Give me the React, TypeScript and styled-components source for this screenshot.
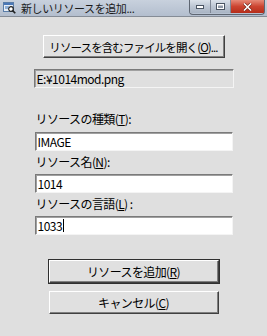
import React from "react";
import styled, { createGlobalStyle } from "styled-components";

//////////////////////////////////////////////////////////////////////////////

const GlobalStyle = createGlobalStyle`
  html, body {
    margin: 0;
    padding: 0;
    background: #dfdfdf;
  }
  body {
    font-family: "Noto Sans CJK JP", "Liberation Sans", sans-serif;
    font-size: 12px;
    color: #000;
  }
`;

const SWindow = styled.div`
  width: 267px;
  height: 336px;
  display: flex;
  flex-direction: column;
  background: #dfdfdf;
  overflow: hidden;
`;

const STitleBar = styled.div`
  height: 17px;
  box-sizing: border-box;
  display: flex;
  align-items: flex-start;
  background: linear-gradient(#c8d1dd, #b3bece);
  border-bottom: 1px solid #858c96;
`;

const STitleIcon = styled.svg`
  width: 13px;
  height: 12px;
  margin: 2px 0 0 3px;
  flex: none;
`;

const STitleText = styled.div`
  margin: 1px 0 0 5px;
  font-size: 11px;
  line-height: 14px;
  letter-spacing: -0.4px;
  color: #1a1a1a;
  flex: 1;
  min-width: 0;
  white-space: nowrap;
`;

const SCaption = styled.div`
  flex: none;
  display: flex;
  height: 14px;
  margin-right: 2px;
  border: 1px solid #5e6672;
  border-top: none;
  border-radius: 0 0 4px 4px;
  overflow: hidden;
`;

const SCaptionButton = styled.div<{ $width: number }>`
  flex: none;
  width: ${(p) => p.$width}px;
  height: 13px;
  display: flex;
  align-items: center;
  justify-content: center;
  box-sizing: border-box;
  border-right: 1px solid #7f8896;
  background-color: #bcc6d3;
  background-image: linear-gradient(#dbe2ea, #bcc6d3 50%, #a9b4c3);
`;

const SCloseButton = styled.div`
  flex: none;
  width: 33px;
  height: 13px;
  display: flex;
  align-items: center;
  justify-content: center;
  background-color: #c8412e;
  background-image: linear-gradient(#e68a78, #cc4430 50%, #b52e1b);
`;

const SBody = styled.div`
  flex: 1;
  display: flex;
  flex-direction: column;
  align-items: center;
  padding-top: 18px;
`;

const SForm = styled.div`
  width: 200px;
  display: flex;
  flex-direction: column;
`;

const SButton = styled.div<{ $width: number; $default?: boolean; $compact?: boolean }>`
  width: ${(p) => p.$width}px;
  height: 23px;
  box-sizing: border-box;
  align-self: center;
  display: flex;
  align-items: center;
  justify-content: center;
  background: #e0e0e0;
  font-size: ${(p) => (p.$compact ? "11.5px" : "12px")};
  letter-spacing: ${(p) => (p.$compact ? "-0.9px" : "-0.6px")};
  white-space: nowrap;
  border: 1px solid;
  border-color: #ffffff #404040 #404040 #ffffff;
  box-shadow: ${(p) =>
    p.$default
      ? "inset -1px -1px 0 #808080, 0 0 0 1px #303030"
      : "inset -1px -1px 0 #808080"};
`;

const SField = styled.div<{ $static?: boolean }>`
  width: ${(p) => (p.$static ? 200 : 198)}px;
  height: 19px;
  box-sizing: border-box;
  align-self: center;
  display: flex;
  align-items: center;
  padding-left: 2px;
  background: ${(p) => (p.$static ? "#dfdfdf" : "#ffffff")};
  border: 1px solid;
  border-color: #7a7a7a #f4f4f4 #f4f4f4 #7a7a7a;
  box-shadow: inset 1px 1px 0 #a0a0a0;
  letter-spacing: -0.5px;
  white-space: nowrap;
`;

const SLabel = styled.div`
  margin-left: 2px;
  line-height: 16px;
  letter-spacing: -0.6px;
  white-space: nowrap;
`;

const SGap = styled.div<{ $h: number }>`
  height: ${(p) => p.$h}px;
  flex: none;
`;

const SCaret = styled.span`
  display: inline-block;
  width: 1px;
  height: 13px;
  background: #000;
  margin-left: 1px;
`;

////////////////////////////////////////////////////////////////////////////

const App = () => {
  return (
    <SWindow>
      <GlobalStyle />
      <STitleBar>
        <STitleIcon viewBox="0 0 13 12">
          <rect x="0.5" y="0.5" width="10" height="9" fill="#e8eef6" stroke="#5a7da8" />
          <rect x="1" y="1" width="9" height="2" fill="#4a78b8" />
          <rect x="2" y="4" width="4" height="3" fill="#8fb0d8" />
          <circle cx="8" cy="7" r="2.3" fill="#ffffff" stroke="#222" strokeWidth="1.2" />
          <line x1="9.6" y1="8.6" x2="12.3" y2="11.3" stroke="#222" strokeWidth="1.6" />
        </STitleIcon>
        <STitleText>新しいリソースを追加...</STitleText>
        <SCaption>
          <SCaptionButton $width={21}>
            <svg width="8" height="4" viewBox="0 0 8 4">
              <rect x="0.5" y="0.5" width="7" height="3" fill="#fff" stroke="#4a5563" strokeWidth="1" />
            </svg>
          </SCaptionButton>
          <SCaptionButton $width={20}>
            <svg width="9" height="7" viewBox="0 0 9 7">
              <rect x="0.5" y="0.5" width="8" height="6" fill="#fff" stroke="#4a5563" />
              <rect x="2" y="2.5" width="5" height="2.5" fill="#8e98a6" />
            </svg>
          </SCaptionButton>
          <SCloseButton>
            <svg width="9" height="8" viewBox="0 0 9 8">
              <path d="M1 0.5 L8 7.5 M8 0.5 L1 7.5" stroke="#6a1f15" strokeWidth="2.8" />
              <path d="M1 0.5 L8 7.5 M8 0.5 L1 7.5" stroke="#fff" strokeWidth="1.6" />
            </svg>
          </SCloseButton>
        </SCaption>
      </STitleBar>

      <SBody>
        <SForm>
          <SButton $width={182} $compact>
            リソースを含むファイルを開く(<u>O</u>)...
          </SButton>
          <SGap $h={11} />
          <SField $static>E:¥1014mod.png</SField>

          <SGap $h={23} />
          <SLabel>
            リソースの種類(<u>T</u>):
          </SLabel>
          <SGap $h={5} />
          <SField>IMAGE</SField>

          <SGap $h={3} />
          <SLabel>
            リソース名(<u>N</u>):
          </SLabel>
          <SGap $h={4} />
          <SField>1014</SField>

          <SGap $h={3} />
          <SLabel>
            リソースの言語(<u>L</u>) :
          </SLabel>
          <SGap $h={4} />
          <SField>
            1033
            <SCaret />
          </SField>

          <SGap $h={25} />
          <SButton $width={170} $default>
            リソースを追加(<u>R</u>)
          </SButton>
          <SGap $h={8} />
          <SButton $width={170}>
            キャンセル(<u>C</u>)
          </SButton>
        </SForm>
      </SBody>
    </SWindow>
  );
};

export default App;
